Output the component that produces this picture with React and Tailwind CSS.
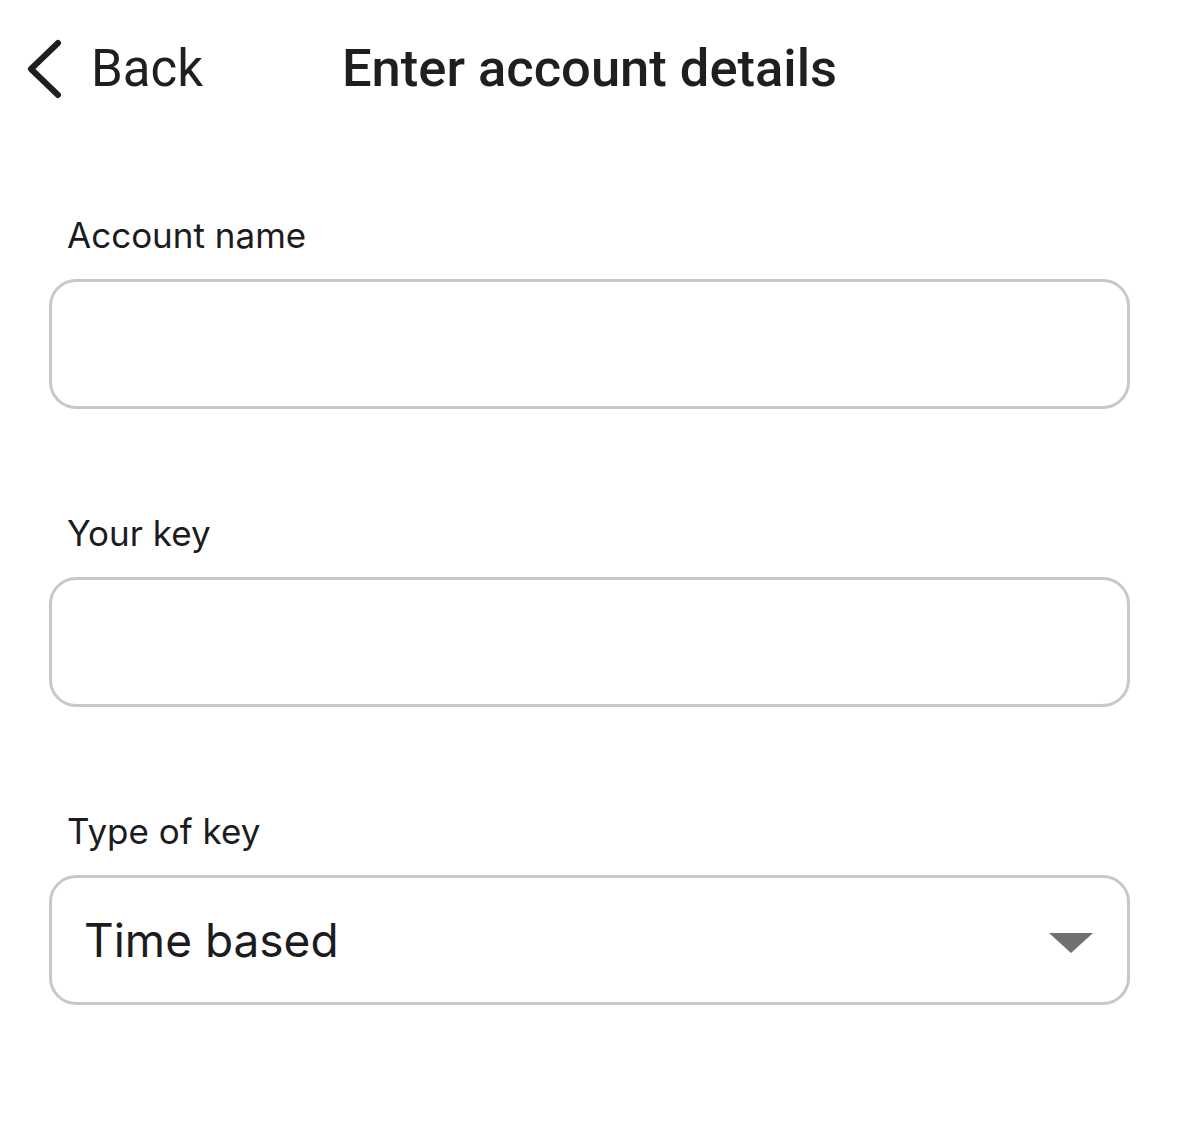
import React from 'react';

const Field = ({ label, children, className = '' }) => (
  <div className={className}>
    <label className="block pl-[67px] text-[35px] leading-[40px] text-[#1c1c1e] [font-family:Inter,'Noto_Sans',sans-serif]">
      {label}
    </label>
    <div className="mx-[49px] mt-[24px] h-[130px] rounded-[27px] border-[3px] border-[#c8c8c8] bg-white flex items-center">
      {children}
    </div>
  </div>
);

const App = () => {
  return (
    <div className="min-h-[1140px] w-[1179px] bg-white text-[#1f1f1f]">
      {/* Header */}
      <header className="grid grid-cols-[1fr_auto_1fr] items-center h-[138px] pb-[2px]">
        <button className="flex items-center pl-[26px] text-left">
          <svg width="38" height="60" viewBox="0 0 38 60" className="mt-[2px]">
            <path d="M32 4 L5 30 L32 56" fill="none" stroke="#1f1f1f" strokeWidth="6" strokeLinecap="round" strokeLinejoin="round" />
          </svg>
          <span className="ml-[27px] text-[51px] leading-none [font-family:Roboto,sans-serif]">Back</span>
        </button>
        <h1 className="text-[52.5px] leading-none font-medium [font-family:Roboto,sans-serif]">
          Enter account details
        </h1>
        <div />
      </header>

      {/* Form */}
      <div className="pt-[77px]">
        <Field label="Account name" />
        <Field label="Your key" className="mt-[104px]" />
        <Field label="Type of key" className="mt-[104px]">
          <div className="flex w-full items-center justify-between pl-[32px] pr-[34px]">
            <span className="text-[46px] leading-none text-[#1c1c1e] [font-family:Inter,sans-serif]">Time based</span>
            <svg width="44" height="20" viewBox="0 0 44 20" className="mt-[6px]">
              <path d="M0 0 H44 L22 20 Z" fill="#707070" />
            </svg>
          </div>
        </Field>
      </div>
    </div>
  );
};

export default App;
